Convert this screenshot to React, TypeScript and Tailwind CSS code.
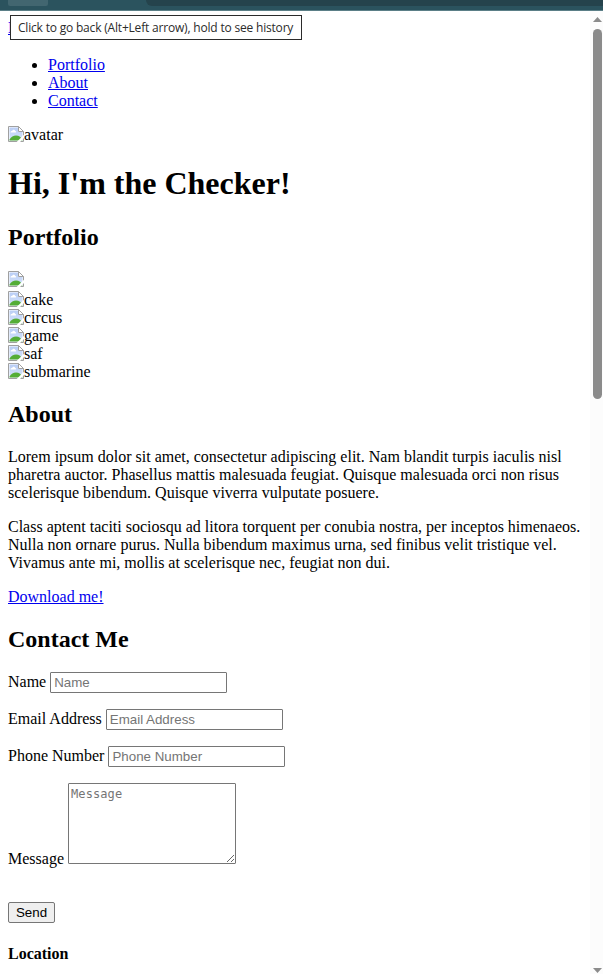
import React from "react";

function BrokenImage({ alt }: { alt?: string }) {
  return (
    <span className="flex h-[18px] items-start">
      <svg width="16" height="16" viewBox="0 0 16 16" className="shrink-0" role="img">
        <defs>
          <linearGradient id="sky" x1="0" y1="0" x2="0" y2="1">
            <stop offset="0" stopColor="#b9cdf5" />
            <stop offset="1" stopColor="#d6e4fb" />
          </linearGradient>
        </defs>
        <path d="M0.5 0.5H10.5L15.5 5.5V15.5H0.5Z" fill="#fff" stroke="#a0a0a0" />
        <path d="M1.5 1.5H10V6H14.5V14.5H1.5Z" fill="url(#sky)" />
        <path d="M2.5 6.5C2.5 5.2 3.5 4.9 4.2 5C4.5 3.4 6.8 3.4 7.2 5C8.4 5 8.6 6.5 7.6 6.5Z" fill="#fff" />
        <path d="M1.5 14.5V13.5C3 11 5.5 9.6 8 9.6C11 9.6 13.5 11.5 14.5 14.5Z" fill="#54ad36" />
        <path d="M10.5 0.5V5.5H15.5Z" fill="#fff" stroke="#a0a0a0" />
        <path d="M8.6 16L16 8.8V12L12 16Z" fill="#fff" />
      </svg>
      {alt && <span>{alt}</span>}
    </span>
  );
}

function Field({ label }: { label: string }) {
  return (
    <label className="mb-4 flex h-[21px] items-baseline gap-1">
      <span>{label}</span>
      <input
        placeholder={label}
        className="h-[21px] w-[177px] rounded-[1px] border border-[#767676] bg-white px-[3px] py-px font-['Liberation_Sans',sans-serif] text-[13.333px] leading-[17px] placeholder:text-[#757575]"
      />
    </label>
  );
}

const link = "text-[#0000ee] underline";

export default function App() {
  return (
    <div className="relative flex h-[974px] w-[603px] flex-col overflow-hidden bg-white font-['Liberation_Serif',serif] text-base leading-[18px] text-black">
      <div className="flex h-[11px] shrink-0 items-start justify-between border-b border-[#5b7f87] bg-[#2b535e]">
        <div className="ml-2 h-[6px] w-10 rounded-b-[2px] bg-[#426670]" />
        <div className="h-[6px] w-[457px] rounded-bl-[12px] bg-[#25434c]" />
      </div>
      <div className="flex min-h-0 flex-1">
        <main className="w-[590px] shrink-0 px-2 pt-2">
          <a className={link}>Home</a>
          <ul className="mt-[19px] list-disc pl-10">
            <li><a className={link}>Portfolio</a></li>
            <li><a className={link}>About</a></li>
            <li><a className={link}>Contact</a></li>
          </ul>
          <div className="mt-4"><BrokenImage alt="avatar" /></div>
          <h1 className="mt-[21px] text-[32px] font-bold leading-[37px]">Hi, I'm the Checker!</h1>
          <h2 className="mt-[22px] text-2xl font-bold leading-[27px]">Portfolio</h2>
          <div className="mt-5">
            <div className="h-5"><BrokenImage /></div>
            <BrokenImage alt="cake" />
            <BrokenImage alt="circus" />
            <BrokenImage alt="game" />
            <BrokenImage alt="saf" />
            <BrokenImage alt="submarine" />
          </div>
          <h2 className="mt-5 text-2xl font-bold leading-[27px]">About</h2>
          <p className="mt-5">
            Lorem ipsum dolor sit amet, consectetur adipiscing elit. Nam blandit turpis iaculis nisl<br />
            pharetra auctor. Phasellus mattis malesuada feugiat. Quisque malesuada orci non risus<br />
            scelerisque bibendum. Quisque viverra vulputate posuere.
          </p>
          <p className="mt-4 whitespace-nowrap">
            Class aptent taciti sociosqu ad litora torquent per conubia nostra, per inceptos himenaeos.<br />
            Nulla non ornare purus. Nulla bibendum maximus urna, sed finibus velit tristique vel.<br />
            Vivamus ante mi, mollis at scelerisque nec, feugiat non dui.
          </p>
          <p className="mt-4"><a className={link}>Download me!</a></p>
          <h2 className="mt-5 text-2xl font-bold leading-[27px]">Contact Me</h2>
          <form className="mt-[19px]">
            <Field label="Name" />
            <Field label="Email Address" />
            <Field label="Phone Number" />
            <label className="flex h-[81px] items-end gap-1">
              <span className="relative top-[4px]">Message</span>
              <textarea
                placeholder="Message"
                className="h-[81px] w-[168px] resize rounded-[1px] border border-[#767676] bg-white p-[2px] font-['DejaVu_Sans_Mono',monospace] text-[12px] leading-[17px] tracking-[0.1px] placeholder:text-[#757575]"
              />
            </label>
            <button
              type="button"
              className="mt-[38px] block h-[21px] w-[47px] rounded-[2px] border border-[#767676] bg-[#efefef] font-['Liberation_Sans',sans-serif] text-[13.333px] leading-[18px]"
            >
              Send
            </button>
          </form>
          <h4 className="mt-[22px] font-bold">Location</h4>
        </main>
        <div className="flex w-[13px] shrink-0 flex-col items-center bg-[#fcfcfc] pl-[2px]">
          <svg width="9" height="5" viewBox="0 0 9 5" className="mt-[6px] shrink-0">
            <path d="M4.5 0L9 5H0Z" fill="#8b8b8b" />
          </svg>
          <div className="mt-[7px] h-[370px] w-[9px] shrink-0 rounded-full bg-[#8b8b8b]" />
          <svg width="9" height="5" viewBox="0 0 9 5" className="mb-px mt-auto shrink-0">
            <path d="M0 0H9L4.5 5Z" fill="#8b8b8b" />
          </svg>
        </div>
      </div>
      <div className="absolute left-[10px] top-[15px] h-[25px] w-[292px] whitespace-nowrap border border-[#2b2b2b] bg-white pl-[7px] font-['Open_Sans',sans-serif] text-[12px] leading-[24px] tracking-[-0.19px] text-[#2b2b2b]">
        Click to go back (Alt+Left arrow), hold to see history
      </div>
    </div>
  );
}
